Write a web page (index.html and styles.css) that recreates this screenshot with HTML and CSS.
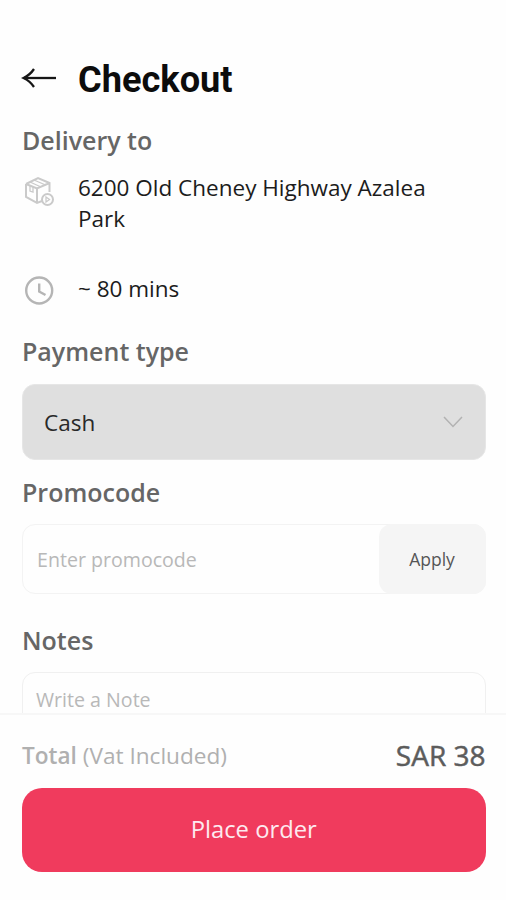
FILE: index.html
```html
<!DOCTYPE html>
<html lang="en">
<head>
<meta charset="utf-8">
<title>Checkout</title>
<link rel="stylesheet" href="styles.css">
</head>
<body>
<div class="screen">
  <main class="content">
    <header class="header">
      <svg class="back" width="36" height="24" viewBox="0 0 36 24"><path d="M13 3Q9 9 2.500 12Q9 15 13 21" /><path d="M3 12H35" /></svg>
      <h1 class="title"><span>Checkout</span></h1>
    </header>
    <h2 class="label delivery"><span>Delivery to</span></h2>
    <div class="row address">
      <svg class="box" width="34" height="34" viewBox="0 0 34 34">
        <path class="face" d="M4 9L16 3L27.500 8V17M4 9V22L15 28L20 26M4 9L15 13.500L27.500 8M15 13.500V28" />
        <path d="M8 7L19 12M12 5L23.500 10M8 11V16L11 17V12" />
        <circle class="face" cx="25.500" cy="24.500" r="5.500" />
        <path d="M24 22L27.500 24.500L24 27Z" />
      </svg>
      <p class="text"><span>6200 Old Cheney Highway Azalea</span><br><span>Park</span></p>
    </div>
    <div class="row time">
      <svg class="clock" width="34" height="34" viewBox="0 0 34 34"><circle cx="17.200" cy="16.500" r="13" /><path d="M17.200 9.500V17.500L23.500 21" /></svg>
      <p class="text"><span>~ 80 mins</span></p>
    </div>
    <h2 class="label payment"><span>Payment type</span></h2>
    <div class="select">
      <span>Cash</span>
      <svg width="20" height="14" viewBox="0 0 20 14"><path d="M1 2L10 11.500L19 2" /></svg>
    </div>
    <h2 class="label promo-label"><span>Promocode</span></h2>
    <div class="promo">
      <span class="placeholder">Enter promocode</span>
      <div class="apply"><span>Apply</span></div>
    </div>
    <h2 class="label notes-label"><span>Notes</span></h2>
    <div class="note"><span class="placeholder note-text">Write a Note</span></div>
  </main>
  <footer class="footer">
    <div class="total">
      <span class="caption"><b>Total</b> (Vat Included)</span>
      <span class="price">SAR 38</span>
    </div>
    <div class="order"><span>Place order</span></div>
  </footer>
</div>
</body>
</html>
```
FILE: styles.css
```css
* { box-sizing: border-box; }
body { margin: 0; background: #fefefe; font-family: "Open Sans", sans-serif; }
h1, h2, p { margin: 0; }
svg { fill: none; flex: none; }
.screen { width: 506px; height: 900px; display: flex; flex-direction: column; overflow: hidden; }
.content { height: 713px; padding: 56px 20.500px 0 22px; overflow: hidden; flex: none; }
.header { display: flex; align-items: center; height: 46px; }
.back { stroke: #161616; stroke-width: 2.3; margin: 0 20px 2px -1px; }
.title { font: bold 36.200px/46px Roboto, sans-serif; color: #0c0c0c; margin: 2px 0 0 1px; }
.label { font-size: 25px; line-height: 36px; height: 36px; font-weight: 600; color: #666; }
.delivery { margin-top: 20px; }
.row { display: flex; }
.text { font-size: 22.500px; line-height: 31px; color: #1c1c1c; margin-left: 22px; }
.address { margin-top: 14px; height: 62px; }
.box { stroke: #cacaca; stroke-width: 1.3; margin-top: 3px; }
.box .face { stroke-width: 2; }
.time { margin-top: 39px; height: 34px; }
.clock { stroke: #b5b5b5; stroke-width: 2.4; margin-top: 1px; }
.payment { margin-top: 26px; }
.select { display: flex; align-items: center; justify-content: space-between; height: 76px; margin-top: 15px; padding: 0 22px 0 21px; background: #dfdfdf; border: 1px solid #e6e6e6; border-radius: 13px; font-size: 22.500px; color: #292929; }
.select svg { stroke: #b2b2b2; stroke-width: 1.5; }
.promo-label { margin-top: 14px; }
.promo { display: flex; align-items: center; justify-content: space-between; height: 70px; margin-top: 14px; border: 1px solid #f3f3f3; border-radius: 13px; padding-left: 14px; }
.placeholder { font-size: 19.600px; color: #b8b8b8; }
.apply { display: flex; align-items: center; justify-content: center; width: 107px; height: 70px; margin-right: -1px; background: #f5f5f5; border-radius: 13px; font-size: 17.500px; color: #555; }
.notes-label { margin-top: 28px; }
.note { height: 90px; margin-top: 14px; border: 1px solid #f0f0f0; border-radius: 13px; padding: 13px; line-height: 27px; }
.footer { height: 187px; padding: 19px 20.500px 0 22px; border-top: 2px solid #f7f7f7; background: #fefefe; }
.total { display: flex; align-items: center; justify-content: space-between; height: 42px; }
.caption { font-size: 22.600px; color: #b0b0b0; }
.caption b { font-weight: 600; }
.price { font-size: 28px; color: #5c5c5c; -webkit-text-stroke: 0.5px #5c5c5c; }
.order { display: flex; align-items: center; justify-content: center; height: 84px; margin-top: 12px; padding-bottom: 2px; border-radius: 20px; background: #f03b5d; color: #fdeaf0; font-size: 23.800px; }
```
